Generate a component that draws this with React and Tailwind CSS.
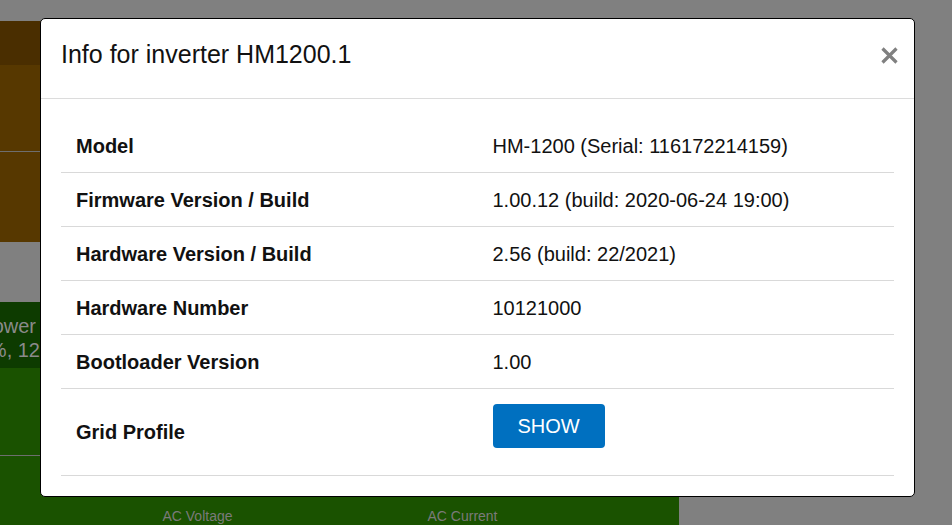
/**
 * Inverter info modal shown over the dimmed live-data page.
 */
const rows = [
  { label: 'Model', value: 'HM-1200 (Serial: 116172214159)' },
  { label: 'Firmware Version / Build', value: '1.00.12 (build: 2020-06-24 19:00)' },
  { label: 'Hardware Version / Build', value: '2.56 (build: 22/2021)' },
  { label: 'Hardware Number', value: '10121000' },
  { label: 'Bootloader Version', value: '1.00' },
]

function BackgroundPage() {
  return (
    <div className="flex flex-col pt-[21px]">
      {/* Inverter card (dimmed) */}
      <div className="flex h-[221px] w-[679px] flex-col bg-[#573800]">
        <div className="h-[44px] bg-[#4a2e00]" />
        <div className="h-[87px] border-b border-[#6e6e6e]" />
      </div>

      {/* Live data card (dimmed) */}
      <div className="mt-[60px] flex h-[300px] w-[679px] flex-col bg-[#1a5200]">
        <div className="flex h-[66px] flex-col bg-[#0d3b00] pt-[12px]">
          <div className="flex w-[36px] justify-end overflow-hidden whitespace-nowrap text-[20px] leading-[24px] text-[#8a8a8a]">
            Current Power
          </div>
          <div className="flex w-[40px] justify-end overflow-hidden whitespace-nowrap text-[20px] leading-[24px] text-[#8a8a8a]">
            4.3%, 12
          </div>
        </div>
        <div className="h-[88px] border-b border-[#6e6e6e]" />
        <div className="ml-[65px] grid grid-cols-[265px_265px] pt-[50px] text-center text-[14px] leading-[20px] text-[#7a7a7a]">
          <span>AC Voltage</span>
          <span>AC Current</span>
        </div>
      </div>
    </div>
  )
}

export default function App() {
  return (
    <div className="relative h-[525px] w-[952px] overflow-hidden bg-[#808080] font-['Liberation_Sans',Arial,sans-serif]">
      <BackgroundPage />

      {/* Modal */}
      <div className="absolute left-[40px] top-[18px] w-[875px] rounded-[5px] border border-black bg-white">
        <div className="flex h-[80px] items-center justify-between border-b border-[#dcdcdc] pl-[20px] pr-[16px]">
          <h5 className="mb-[9px] text-[25px] leading-[30px] text-[#111]">Info for inverter HM1200.1</h5>
          <button type="button" className="mb-[6px] flex h-[17px] w-[17px] items-center justify-center">
            <svg width="17" height="17" viewBox="0 0 17 17" fill="none" stroke="#808080" strokeWidth="3.2">
              <path d="M1.5 1.5 L15.5 15.5 M15.5 1.5 L1.5 15.5" />
            </svg>
          </button>
        </div>

        <div className="p-[20px]">
          <div className="flex flex-col text-[20px] text-[#111]">
            {rows.map((row, i) => (
              <div
                key={row.label}
                className={
                  i === 0
                    ? 'grid h-[53px] grid-cols-2 items-center'
                    : 'grid h-[54px] grid-cols-2 items-center border-t border-[#d9d9d9]'
                }
              >
                <div className="px-[15px] font-bold">{row.label}</div>
                <div className="px-[15px]">{row.value}</div>
              </div>
            ))}
            <div className="grid grid-cols-2 border-y border-[#d9d9d9]">
              <div className="self-center px-[15px] font-bold">Grid Profile</div>
              <div className="px-[15px] pb-[27px] pt-[15px]">
                <button
                  type="button"
                  className="flex h-[44px] w-[112px] items-center justify-center rounded-[4px] bg-[#0070c0] text-[20px] text-white"
                >
                  SHOW
                </button>
              </div>
            </div>
          </div>
        </div>
      </div>
    </div>
  )
}
